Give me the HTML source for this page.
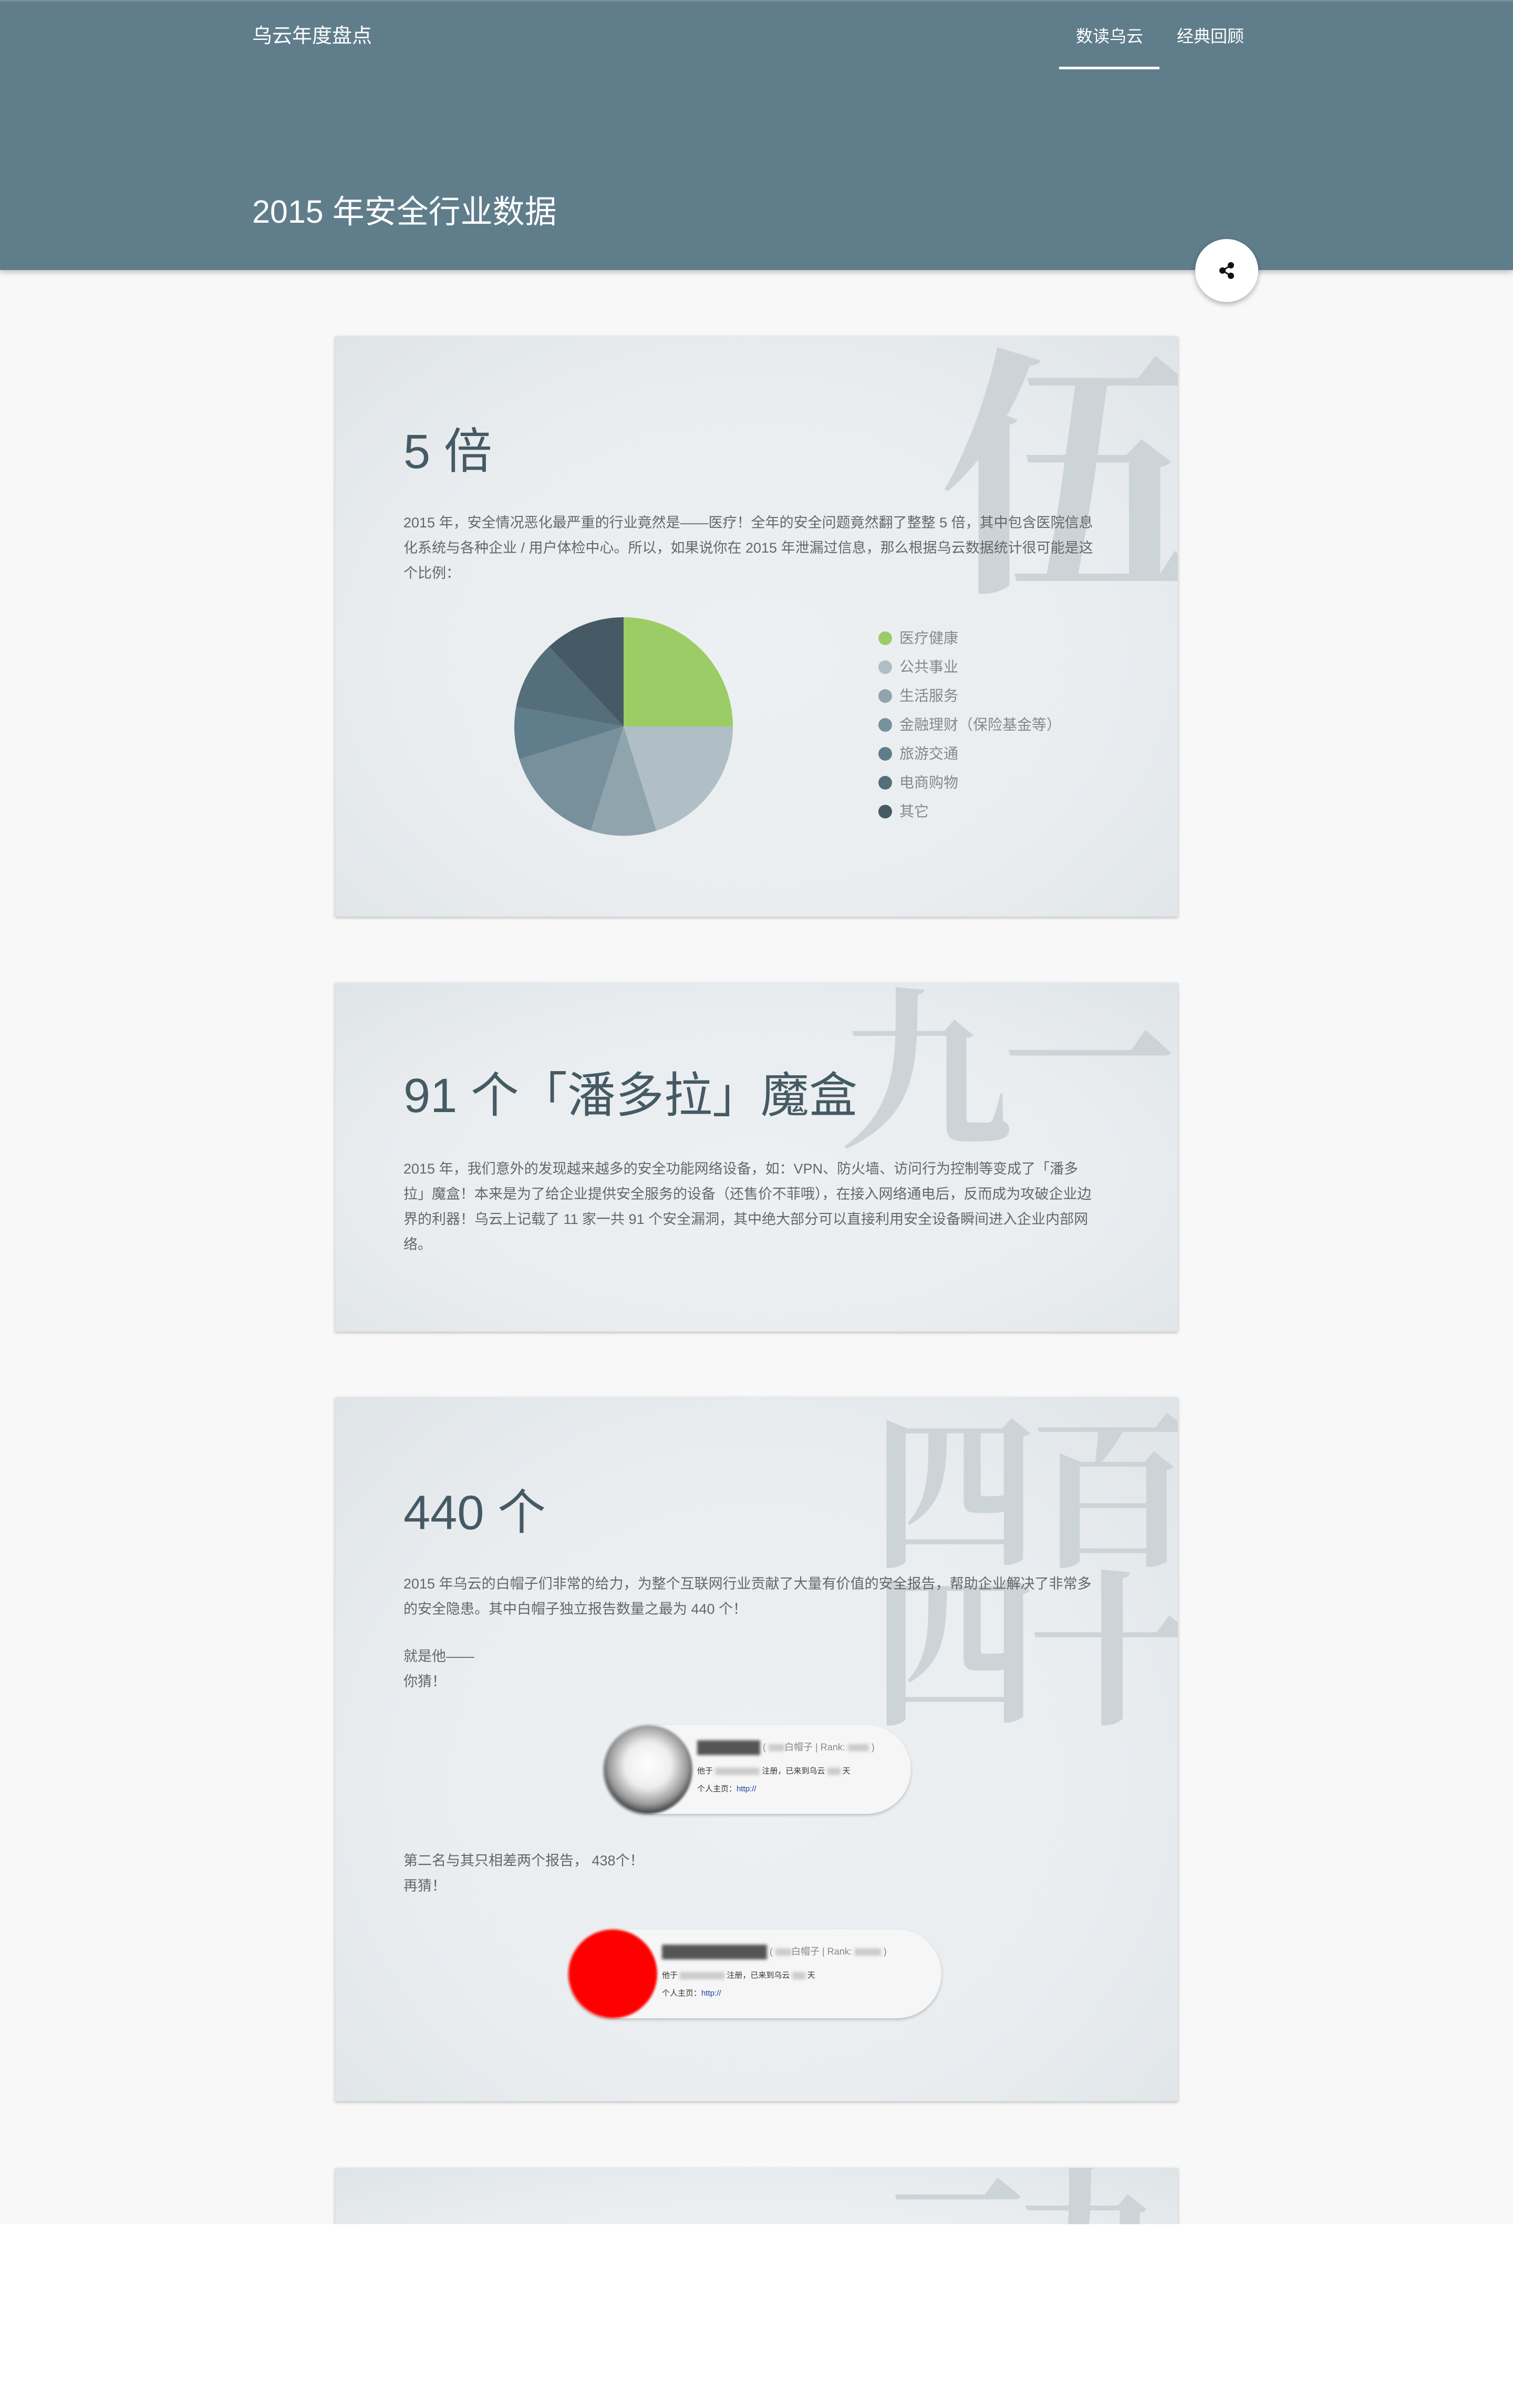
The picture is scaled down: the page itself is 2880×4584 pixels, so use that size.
<!DOCTYPE html>
<html><head><meta charset="utf-8">
<style>
*{margin:0;padding:0;box-sizing:border-box}
body{width:2880px;height:4584px;background:#fff;font-family:"Liberation Sans","Noto Sans CJK SC",sans-serif;position:relative;overflow:hidden}
.page{position:absolute;left:0;top:0;width:2880px;height:4234px;background:#f8f8f8;overflow:hidden}
.hdr{position:absolute;left:0;top:0;width:2880px;height:514px;background:#607d8b;border-top:3px solid #7c8e97;box-shadow:0 4px 10px rgba(0,0,0,.25)}
.brand{position:absolute;left:480px;top:38px;color:#fff;font-size:38px;line-height:56px}
.nav{position:absolute;top:38px;color:#fff;font-size:32px;line-height:56px}
.ul{position:absolute;left:2016px;top:124px;width:191px;height:5px;background:#fff}
.title{position:absolute;left:480px;top:355px;color:#fff;font-size:61px;line-height:90px}
.share{position:absolute;left:2275px;top:455px;width:120px;height:120px;border-radius:50%;background:#fff;box-shadow:0 4px 10px rgba(0,0,0,.3)}
.card{position:absolute;left:638px;width:1604px;background:radial-gradient(ellipse at 50% 55%,#edf0f2 0%,#e9edf0 60%,#dfe4e7 100%);box-shadow:0 2px 6px rgba(0,0,0,.25);overflow:hidden}
.bg{position:absolute;font-family:"Noto Serif CJK SC","WenQuanYi Zen Hei",serif;color:#cdd4d8;font-weight:700;line-height:1}
.h{position:absolute;left:130px;color:#455a64;font-size:92px;line-height:120px}
.p{position:absolute;left:130px;width:1322px;color:#666;font-size:27px;line-height:48px}
.lg{position:absolute;left:1034px;font-size:28px;color:#888;line-height:40px}
.lg i{display:inline-block;width:26px;height:26px;border-radius:50%;vertical-align:-4px;margin-right:14px}
.prof{position:absolute;background:#f6f6f6;border-radius:90px;box-shadow:0 3px 6px rgba(0,0,0,.2)}
.av{position:absolute;border-radius:50%}
.t{position:absolute;font-size:18px;color:#333;white-space:nowrap}
.bl{display:inline-block;background:#ccc;filter:blur(3px);height:14px;vertical-align:middle}
</style></head><body>
<div class="page">
<div class="hdr">
 <div class="brand">乌云年度盘点</div>
 <div class="nav" style="left:2048px">数读乌云</div>
 <div class="nav" style="left:2240px">经典回顾</div>
 <div class="ul"></div>
 <div class="title">2015 年安全行业数据</div>
</div>
<div class="share"><svg width="120" height="120" viewBox="0 0 120 120"><g fill="#111"><circle cx="68" cy="50" r="6"/><circle cx="52" cy="60" r="6"/><circle cx="68" cy="70" r="6"/></g><path d="M68 50L52 60L68 70" stroke="#111" stroke-width="3" fill="none"/></svg></div>

<div class="card" style="top:640px;height:1105px">
 <div class="bg" style="left:1150px;top:-20px;font-size:500px">伍</div>
 <div class="h" style="top:160px">5 倍</div>
 <div class="p" style="top:331px">2015 年，安全情况恶化最严重的行业竟然是——医疗！全年的安全问题竟然翻了整整 5 倍，其中包含医院信息化系统与各种企业 / 用户体检中心。所以，如果说你在 2015 年泄漏过信息，那么根据乌云数据统计很可能是这个比例：</div>
 <div class="lg" style="top:555px"><i style="background:#9ccc65"></i>医疗健康</div>
 <div class="lg" style="top:610px"><i style="background:#b0bec5"></i>公共事业</div>
 <div class="lg" style="top:665px"><i style="background:#90a4ae"></i>生活服务</div>
 <div class="lg" style="top:720px"><i style="background:#78909c"></i>金融理财（保险基金等）</div>
 <div class="lg" style="top:775px"><i style="background:#607d8b"></i>旅游交通</div>
 <div class="lg" style="top:830px"><i style="background:#546e7a"></i>电商购物</div>
 <div class="lg" style="top:885px"><i style="background:#455a64"></i>其它</div>
 <svg style="position:absolute;left:0;top:0" width="1604" height="1105" viewBox="638 640 1604 1105">
  <path d="M1187 1383L1187 1175A208 208 0 0 1 1395 1383Z" fill="#9ccc65"/>
  <path d="M1187 1383L1395 1383A208 208 0 0 1 1249.5 1581.4Z" fill="#b0bec5"/>
  <path d="M1187 1383L1249.5 1581.4A208 208 0 0 1 1124.5 1581.4Z" fill="#90a4ae"/>
  <path d="M1187 1383L1124.5 1581.4A208 208 0 0 1 988.5 1445.2Z" fill="#78909c"/>
  <path d="M1187 1383L988.5 1445.2A208 208 0 0 1 982.5 1345.1Z" fill="#607d8b"/>
  <path d="M1187 1383L982.5 1345.1A208 208 0 0 1 1045.1 1230.9Z" fill="#546e7a"/>
  <path d="M1187 1383L1045.1 1230.9A208 208 0 0 1 1187 1175Z" fill="#455a64"/>
 </svg>
</div>

<div class="card" style="top:1871px;height:664px">
 <div class="bg" style="left:960px;top:-20px;font-size:330px">九</div>
 <div class="bg" style="left:1270px;top:-40px;font-size:330px">一</div>
 <div class="h" style="top:155px">91 个「潘多拉」魔盒</div>
 <div class="p" style="top:330px">2015 年，我们意外的发现越来越多的安全功能网络设备，如：VPN、防火墙、访问行为控制等变成了「潘多拉」魔盒！本来是为了给企业提供安全服务的设备（还售价不菲哦），在接入网络通电后，反而成为攻破企业边界的利器！乌云上记载了 11 家一共 91 个安全漏洞，其中绝大部分可以直接利用安全设备瞬间进入企业内部网络。</div>
</div>

<div class="card" style="top:2660px;height:1340px">
 <div class="bg" style="left:1020px;top:0px;font-size:320px">四</div>
 <div class="bg" style="left:1320px;top:0px;font-size:320px">百</div>
 <div class="bg" style="left:1020px;top:300px;font-size:320px">四</div>
 <div class="bg" style="left:1320px;top:300px;font-size:320px">十</div>
 <div class="h" style="top:160px">440 个</div>
 <div class="p" style="top:331px">2015 年乌云的白帽子们非常的给力，为整个互联网行业贡献了大量有价值的安全报告，帮助企业解决了非常多的安全隐患。其中白帽子独立报告数量之最为 440 个！</div>
 <div class="p" style="top:469px">就是他——<br>你猜！</div>
 <div class="prof" style="left:511px;top:624px;width:585px;height:169px">
  <div class="av" style="left:0;top:0;width:169px;height:169px;background:radial-gradient(circle at 50% 45%,#fff 0%,#eee 35%,#999 60%,#111 80%);filter:blur(2px)"></div>
  <div class="t" style="left:178px;top:28px"><span class="bl" style="width:120px;height:28px;background:#555"></span> <span style="color:#888;font-size:18px">( <span class="bl" style="width:30px"></span>白帽子 | Rank: <span class="bl" style="width:40px"></span> )</span></div>
  <div class="t" style="left:178px;top:76px;font-size:15px">他于 <span class="bl" style="width:85px"></span> 注册，已来到乌云 <span class="bl" style="width:25px"></span> 天</div>
  <div class="t" style="left:178px;top:110px;font-size:15px">个人主页：<span style="color:#1a3fa0">http://</span></div>
 </div>
 <div class="p" style="top:858px">第二名与其只相差两个报告， 438个！<br>再猜！</div>
 <div class="prof" style="left:444px;top:1013px;width:710px;height:169px">
  <div class="av" style="left:0;top:0;width:169px;height:169px;background:#f00;filter:blur(2px)"></div>
  <div class="t" style="left:178px;top:28px"><span class="bl" style="width:200px;height:28px;background:#555"></span> <span style="color:#888;font-size:18px">( <span class="bl" style="width:30px"></span>白帽子 | Rank: <span class="bl" style="width:50px"></span> )</span></div>
  <div class="t" style="left:178px;top:76px;font-size:15px">他于 <span class="bl" style="width:85px"></span> 注册，已来到乌云 <span class="bl" style="width:25px"></span> 天</div>
  <div class="t" style="left:178px;top:110px;font-size:15px">个人主页：<span style="color:#1a3fa0">http://</span></div>
 </div>
</div>

<div class="card" style="top:4127px;height:400px">
 <div class="bg" style="left:1020px;top:-40px;font-size:330px">二</div>
 <div class="bg" style="left:1290px;top:-40px;font-size:330px">九</div>
</div>
</div>
</body></html>
